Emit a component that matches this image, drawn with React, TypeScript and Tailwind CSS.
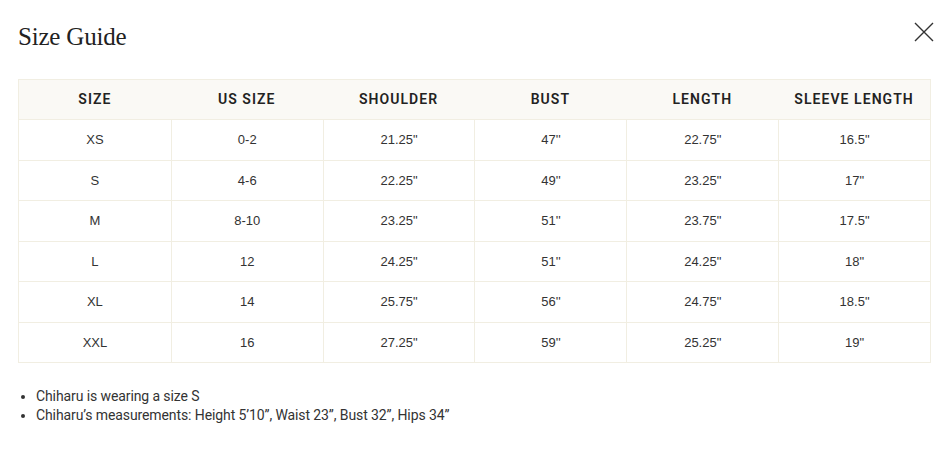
const headers = ["SIZE", "US SIZE", "SHOULDER", "BUST", "LENGTH", "SLEEVE LENGTH"];

const rows = [
  ["XS", "0-2", "21.25\"", "47''", "22.75\"", "16.5\""],
  ["S", "4-6", "22.25\"", "49''", "23.25\"", "17\""],
  ["M", "8-10", "23.25\"", "51''", "23.75\"", "17.5\""],
  ["L", "12", "24.25\"", "51''", "24.25\"", "18\""],
  ["XL", "14", "25.75\"", "56''", "24.75\"", "18.5\""],
  ["XXL", "16", "27.25\"", "59''", "25.25\"", "19\""],
];

function CloseIcon() {
  return (
    <svg width="20" height="20" viewBox="0 0 20 20" fill="none" stroke="#333" strokeWidth="1.4">
      <path d="M1 1 L19 19 M19 1 L1 19" />
    </svg>
  );
}

export default function App() {
  return (
    <div className="w-[948px] h-[471px] bg-white px-[18px] pt-[22px] relative">
      <div className="flex items-start justify-between">
        <h2 className="text-[25px] leading-[30px] text-[#222] font-['Liberation_Serif',serif] tracking-[-0.2px]">
          Size Guide
        </h2>
        <button className="mr-[-4px] p-0">
          <CloseIcon />
        </button>
      </div>

      <div className="mt-[27px] w-[913px] border border-[#f1eee2]">
        <div className="grid grid-cols-6 h-[39px] bg-[#faf9f5] items-center">
          {headers.map((h) => (
            <div
              key={h}
              className="text-center text-[14px] font-semibold tracking-[0.075em] text-[#222] font-['Roboto',sans-serif]"
            >
              {h}
            </div>
          ))}
        </div>
        {rows.map((r, i) => (
          <div key={i} className="grid grid-cols-6 h-[40.5px] border-t border-[#f1eee2]">
            {r.map((c, j) => (
              <div
                key={j}
                className={`flex items-center justify-center text-[13px] text-[#333] font-['Liberation_Sans',Arial,sans-serif] ${
                  j > 0 ? "border-l border-[#f1eee2]" : ""
                }`}
              >
                {c}
              </div>
            ))}
          </div>
        ))}
      </div>

      <ul className="mt-[24px] list-disc pl-[18px] text-[14px] leading-[19px] text-[#333] font-['Roboto',sans-serif] tracking-[-0.1px]">
        <li>Chiharu is wearing a size S</li>
        <li>Chiharu’s measurements: Height 5’10”, Waist 23”, Bust 32”, Hips 34”</li>
      </ul>
    </div>
  );
}
